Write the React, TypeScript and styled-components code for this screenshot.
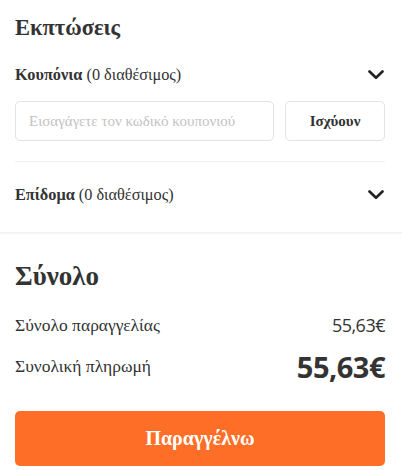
import React from "react";
import styled, { createGlobalStyle } from "styled-components";

const Global = createGlobalStyle`
  html, body { margin: 0; padding: 0; background: #fff; }
  body { font-family: "Liberation Serif", "Times New Roman", serif; color: #333; }
  * { box-sizing: border-box; }
`;

const Page = styled.div`
  width: 402px;
  display: flex;
  flex-direction: column;
`;

const Discounts = styled.section`
  display: flex;
  flex-direction: column;
  padding: 13px 17px 0 15px;
  border-bottom: 2px solid #f3f3f3;
`;

const Title = styled.h2<{ size: number }>`
  margin: 0;
  font-size: ${(p) => p.size}px;
  line-height: 30px;
  font-weight: 700;
  color: #333;
`;

const AccordionRow = styled.div`
  display: flex;
  align-items: center;
  justify-content: space-between;
  height: 24px;
  font-size: 16.3px;
`;

const Label = styled.span`
  b { font-weight: 700; }
`;

const Chevron = () => (
  <svg width="16" height="10" viewBox="0 0 16 10" style={{ marginRight: 1 }}>
    <path d="M1.5 1.5 L8 7.8 L14.5 1.5" fill="none" stroke="#222" strokeWidth="2.6" strokeLinecap="round" strokeLinejoin="round" />
  </svg>
);

const CouponForm = styled.div`
  display: flex;
  gap: 11px;
  margin-top: 14px;
`;

const Input = styled.input`
  flex: 1;
  height: 40px;
  border: 1px solid #e3e3e3;
  border-radius: 5px;
  padding: 0 13px;
  font-family: "Liberation Serif", serif;
  font-size: 15px;
  color: #333;
  outline: none;
  &::placeholder { color: #c2c2c2; }
`;

const ApplyButton = styled.button`
  width: 100px;
  height: 40px;
  border: 1px solid #e3e3e3;
  border-radius: 5px;
  background: #fff;
  font-family: "Liberation Serif", serif;
  font-weight: 700;
  font-size: 15px;
  color: #333;
`;

const Divider = styled.hr`
  border: 0;
  border-top: 1px solid #f0f0f0;
  margin: 20px 0 0;
`;

const Total = styled.div`
  display: flex;
  flex-direction: column;
  padding: 27px 17px 0 15px;
`;

const PriceRow = styled.div<{ h: number }>`
  display: flex;
  align-items: center;
  justify-content: space-between;
  height: ${(p) => p.h}px;
  font-size: 17.5px;
`;

const Price = styled.span<{ big?: boolean }>`
  font-family: "Open Sans", "Noto Sans", sans-serif;
  font-size: ${(p) => (p.big ? 29 : 18)}px;
  font-weight: ${(p) => (p.big ? 700 : 400)};
  color: #333;
  letter-spacing: -0.5px;
`;

const OrderButton = styled.button`
  height: 55px;
  margin-top: 27px;
  border: 0;
  border-radius: 5px;
  background: #ff6e26;
  color: #fff;
  font-family: "Liberation Serif", serif;
  font-weight: 700;
  font-size: 20px;
`;

export default function App() {
  return (
    <Page>
      <Global />
      <Discounts>
        <Title size={22.5}>Εκπτώσεις</Title>
        <AccordionRow style={{ marginTop: 20 }}>
          <Label><b>Κουπόνια</b> (0 διαθέσιμος)</Label>
          <Chevron />
        </AccordionRow>
        <CouponForm>
          <Input placeholder="Εισαγάγετε τον κωδικό κουπονιού" />
          <ApplyButton>Ισχύουν</ApplyButton>
        </CouponForm>
        <Divider />
        <AccordionRow style={{ marginTop: 21, marginBottom: 25 }}>
          <Label><b>Επίδομα</b> (0 διαθέσιμος)</Label>
          <Chevron />
        </AccordionRow>
      </Discounts>
      <Total>
        <Title size={27}>Σύνολο</Title>
        <PriceRow h={24} style={{ marginTop: 22 }}>
          <span>Σύνολο παραγγελίας</span>
          <Price>55,63€</Price>
        </PriceRow>
        <PriceRow h={36} style={{ marginTop: 11 }}>
          <span>Συνολική πληρωμή</span>
          <Price big>55,63€</Price>
        </PriceRow>
        <OrderButton>Παραγγέλνω</OrderButton>
      </Total>
    </Page>
  );
}
